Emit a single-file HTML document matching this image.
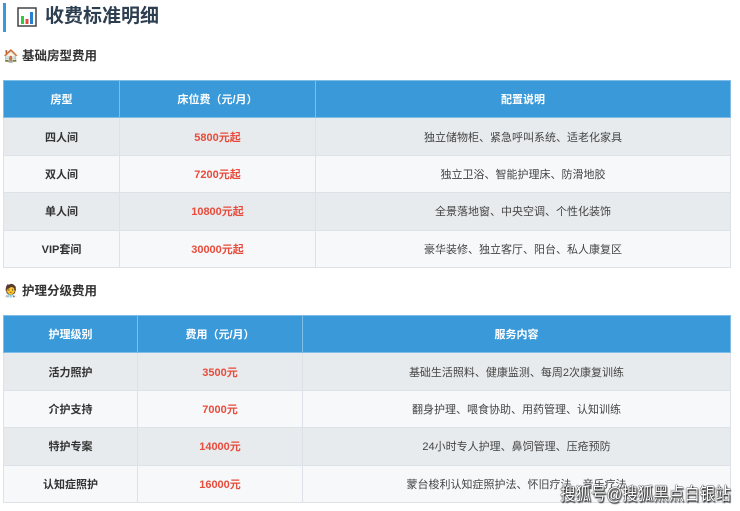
<!DOCTYPE html>
<html><head><meta charset="utf-8"><style>
*{margin:0;padding:0;box-sizing:border-box}
body{width:740px;height:511px;overflow:hidden;background:#fff;font-family:"Liberation Sans","Noto Sans CJK SC",sans-serif;color:#333;position:relative}
.bar{position:absolute;left:3px;top:3px;width:3px;height:29px;background:#3a9ad9}
.title{position:absolute;left:17px;top:4px;font-size:19px;font-weight:bold;color:#2c3e50;line-height:26px;display:flex;align-items:center}
.h{position:absolute;left:3px;font-size:12.5px;font-weight:bold;color:#333;line-height:16px}
table{position:absolute;left:3px;width:728px;border-collapse:collapse;font-size:11px;table-layout:fixed}
td,th{text-align:center;border:1px solid #dde2e8;height:37.4px;padding:0}
th{background:#3a9ad9;color:#fff;font-weight:bold;border-color:#7fbce6}
tr.o td{background:#e8ebee}
tr.e td{background:#f7f8fa}
td.n{font-weight:bold;color:#333}
td.p{color:#e74c3c;font-weight:bold}
td.d{color:#444}
.wm{position:absolute;left:560px;top:484px;font-size:15.5px;line-height:20px;color:#fff;white-space:nowrap;transform:scaleY(1.15);transform-origin:left top;text-shadow:0 0 1px #000,0 0 1px #000,1px 1px 1px #333}
</style></head><body>
<div class="bar"></div>
<div class="title"><svg width="20" height="20" viewBox="0 0 20 20" style="margin-right:8px"><rect x="1" y="1" width="18" height="18" fill="#fff" stroke="#444" stroke-width="1.5"/><rect x="4" y="9" width="3" height="8" fill="#2ecc40"/><rect x="8.5" y="12" width="3" height="5" fill="#e74c3c"/><rect x="13" y="5" width="3" height="12" fill="#2a7fd4"/></svg>收费标准明细</div>
<div class="h" style="top:48px">🏠 基础房型费用</div>
<table style="top:80px">
<colgroup><col style="width:116px"><col style="width:196px"><col></colgroup>
<tr><th>房型</th><th>床位费（元/月）</th><th>配置说明</th></tr>
<tr class="o"><td class="n">四人间</td><td class="p">5800元起</td><td class="d">独立储物柜、紧急呼叫系统、适老化家具</td></tr>
<tr class="e"><td class="n">双人间</td><td class="p">7200元起</td><td class="d">独立卫浴、智能护理床、防滑地胶</td></tr>
<tr class="o"><td class="n">单人间</td><td class="p">10800元起</td><td class="d">全景落地窗、中央空调、个性化装饰</td></tr>
<tr class="e"><td class="n">VIP套间</td><td class="p">30000元起</td><td class="d">豪华装修、独立客厅、阳台、私人康复区</td></tr>
</table>
<div class="h" style="top:283px">🧑‍⚕️ 护理分级费用</div>
<table style="top:315px">
<colgroup><col style="width:134px"><col style="width:165px"><col></colgroup>
<tr><th>护理级别</th><th>费用（元/月）</th><th>服务内容</th></tr>
<tr class="o"><td class="n">活力照护</td><td class="p">3500元</td><td class="d">基础生活照料、健康监测、每周2次康复训练</td></tr>
<tr class="e"><td class="n">介护支持</td><td class="p">7000元</td><td class="d">翻身护理、喂食协助、用药管理、认知训练</td></tr>
<tr class="o"><td class="n">特护专案</td><td class="p">14000元</td><td class="d">24小时专人护理、鼻饲管理、压疮预防</td></tr>
<tr class="e"><td class="n">认知症照护</td><td class="p">16000元</td><td class="d">蒙台梭利认知症照护法、怀旧疗法、音乐疗法</td></tr>
</table>
<div class="wm">搜狐号@搜狐黑点白银站</div>
</body></html>
